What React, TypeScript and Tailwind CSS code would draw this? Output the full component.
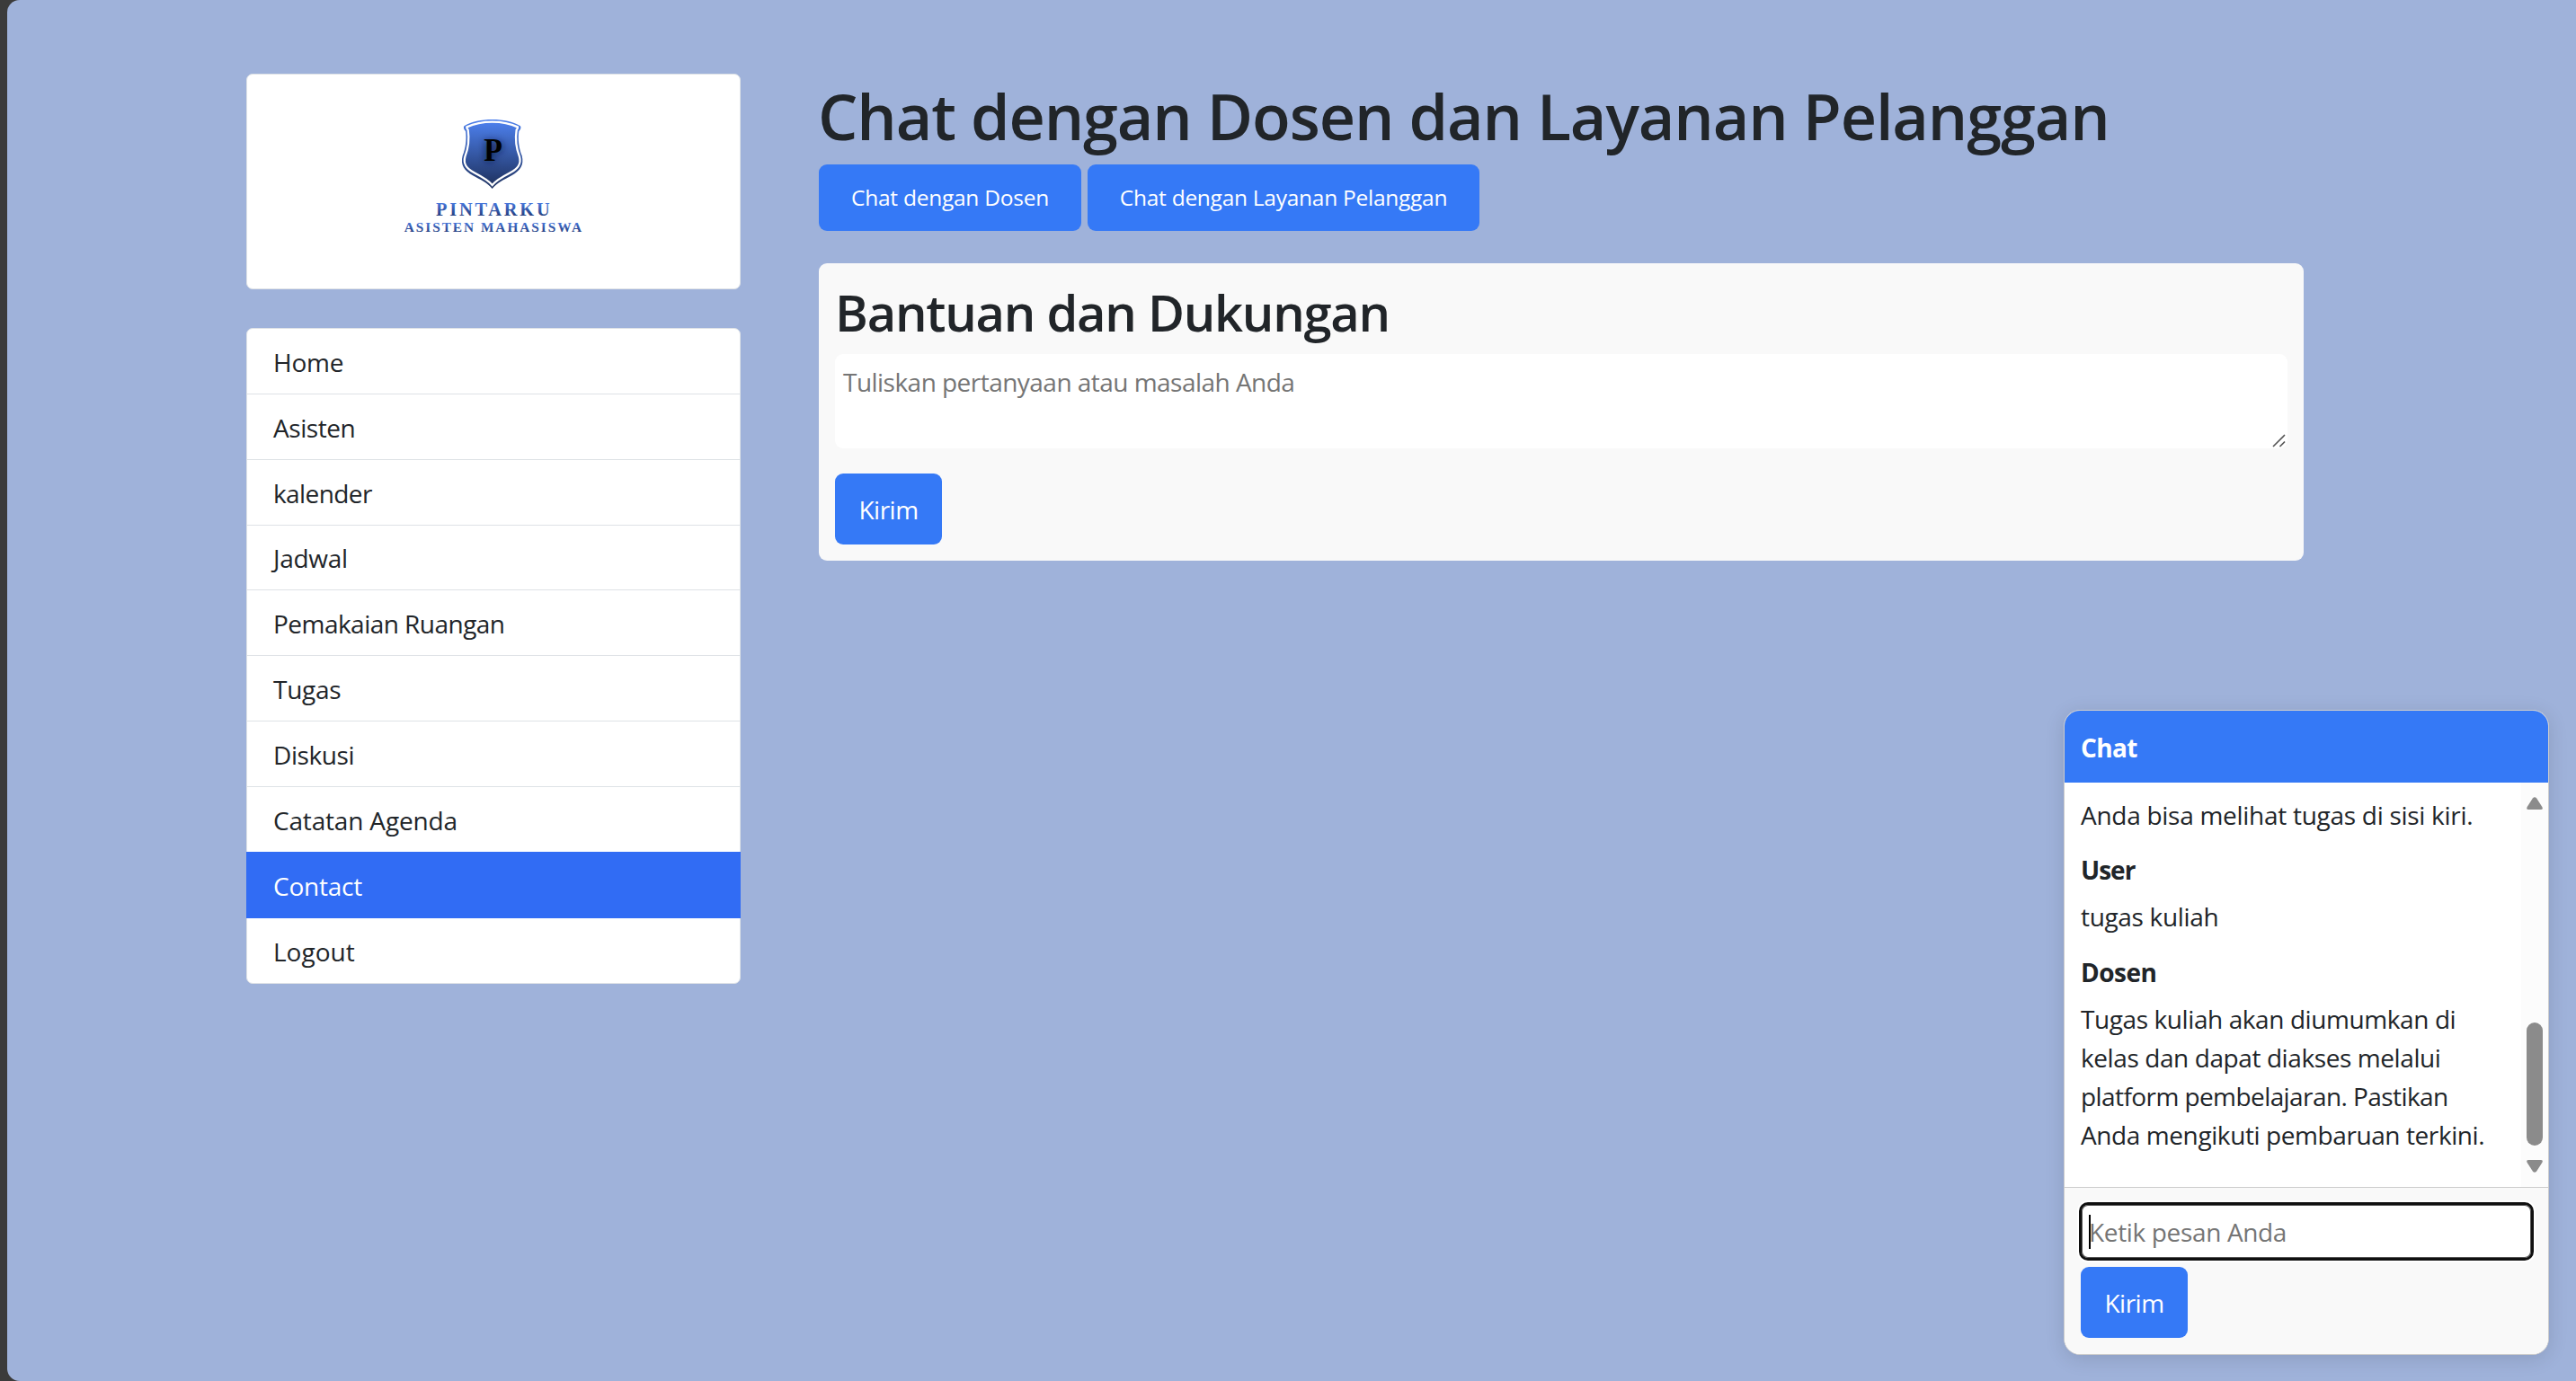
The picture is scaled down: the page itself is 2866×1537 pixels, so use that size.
const navItems = [
  { label: 'Home', style: 'h-[73px] border-b tracking-[-0.2px]' },
  { label: 'Asisten', style: 'h-[73px] border-b tracking-[-0.45px]' },
  { label: 'kalender', style: 'h-[73px] border-b tracking-[-0.6px]' },
  { label: 'Jadwal', style: 'h-[72px] border-b tracking-[-0.3px]' },
  { label: 'Pemakaian Ruangan', style: 'h-[73px] border-b tracking-[-0.53px]' },
  { label: 'Tugas', style: 'h-[73px] border-b tracking-[-0.25px]' },
  { label: 'Diskusi', style: 'h-[73px] border-b tracking-[-0.4px]' },
  { label: 'Catatan Agenda', style: 'h-[72px] tracking-[-0.17px]' },
  { label: 'Contact', style: '-mx-px h-[74px] bg-[#316cf4] pl-[30px] text-white tracking-[-0.22px]' },
  { label: 'Logout', style: 'h-[72px] tracking-[0px]' },
];

function Logo() {
  return (
    <svg viewBox="0 21 774 510" className="h-[170px] w-[258px]" role="img" aria-label="Pintarku">
      <defs>
        <linearGradient id="shield" x1="0" y1="0" x2="0" y2="1">
          <stop offset="0" stopColor="#4c7fec" />
          <stop offset="1" stopColor="#1f3260" />
        </linearGradient>
        <linearGradient id="title" gradientUnits="userSpaceOnUse" x1="0" y1="345" x2="0" y2="394">
          <stop offset="0" stopColor="#4a7be3" />
          <stop offset="1" stopColor="#223a78" />
        </linearGradient>
        <linearGradient id="subtitle" gradientUnits="userSpaceOnUse" x1="0" y1="410" x2="0" y2="448">
          <stop offset="0" stopColor="#4a7be3" />
          <stop offset="1" stopColor="#223a78" />
        </linearGradient>
        <filter id="glow" x="-50%" y="-50%" width="200%" height="200%">
          <feGaussianBlur stdDeviation="12" />
        </filter>
      </defs>
      <path
        d="M383 69C420 69 452 76 477 91C480 97 478 102 472 108C468 135 472 165 482 190C490 222 476 240 448 256C422 270 398 282 383 300C368 282 344 270 318 256C290 240 276 222 284 190C294 165 298 135 294 108C288 102 286 97 289 91C314 76 346 69 383 69Z"
        fill="url(#shield)"
      />
      <path
        d="M383 77C415 77 444 83 468 94C469 98 467 101 464 104C459 137 464 168 474 193C481 219 468 234 443 247C418 260 397 271 383 288C369 271 348 260 323 247C298 234 285 219 292 193C302 168 307 137 302 104C299 101 297 98 298 94C322 83 351 77 383 77Z"
        fill="url(#shield)"
        stroke="#fff"
        strokeWidth="7"
      />
      <text x="386" y="207" textAnchor="middle" fontFamily="Liberation Serif, serif" fontWeight="700" fontSize="104" fill="#101c40" filter="url(#glow)">
        P
      </text>
      <text x="355" y="207" textLength="62" lengthAdjust="spacingAndGlyphs" fontFamily="Liberation Serif, serif" fontWeight="700" fontSize="110" fill="#000">
        P
      </text>
      <text x="195" y="390" textLength="380" fontFamily="Liberation Serif, serif" fontWeight="700" fontSize="61" fill="url(#title)">
        PINTARKU
      </text>
      <text x="89" y="445" textLength="592" fontFamily="Liberation Serif, serif" fontWeight="700" fontSize="46" fill="url(#subtitle)">
        ASISTEN MAHASISWA
      </text>
    </svg>
  );
}

function Sidebar() {
  return (
    <aside className="flex w-[550px] flex-col gap-[43px]">
      <div className="flex h-[240px] items-center justify-center rounded-[7px] border border-[#dee2e6] bg-white">
        <Logo />
      </div>
      <nav className="flex flex-col rounded-[7px] border border-[#dee2e6] bg-white">
        {navItems.map((item) => (
          <a key={item.label} href="#" className={`flex items-center border-[#dee2e6] pt-px pl-[29px] ${item.style}`}>
            {item.label}
          </a>
        ))}
      </nav>
    </aside>
  );
}

function MainContent() {
  return (
    <main className="flex w-[1652px] flex-col">
      <h1 className="-ml-px h-[101px] text-[70px] leading-[94px] font-semibold tracking-[-1.08px] whitespace-nowrap">
        Chat dengan Dosen dan Layanan Pelanggan
      </h1>
      <div className="flex gap-[7px] text-[24.5px] text-white">
        <button className="h-[74px] w-[292px] rounded-[9px] bg-[#3579f6] pt-px tracking-[-0.25px]">Chat dengan Dosen</button>
        <button className="h-[74px] w-[436px] rounded-[9px] bg-[#3579f6] pt-px tracking-[-0.27px]">
          Chat dengan Layanan Pelanggan
        </button>
      </div>
      <section className="mt-9 flex h-[331px] flex-col items-start rounded-[9px] bg-[#f9f9f9] p-[18px]">
        <h2 className="h-[83px] text-[56px] leading-[73px] font-semibold tracking-[-1.24px]">Bantuan dan Dukungan</h2>
        <div className="relative h-[105px] w-full">
          <textarea
            placeholder="Tuliskan pertanyaan atau masalah Anda"
            className="block h-full w-full resize-none rounded-[9px] bg-white px-[9px] py-[10px] leading-[43px] tracking-[-0.53px] outline-none placeholder:text-[#757575]"
          />
          <svg viewBox="0 0 16 16" className="absolute right-[1px] bottom-[1px] h-4 w-4" fill="none" stroke="#555" strokeWidth="1.6">
            <path d="M1 15 14 2M8.500 15 14 9.500" />
          </svg>
        </div>
        <button className="mt-7 h-[79px] w-[119px] rounded-[9px] bg-[#3579f6] tracking-[-0.5px] text-white">Kirim</button>
      </section>
    </main>
  );
}

function ScrollArrow({ className }: { className: string }) {
  return (
    <svg viewBox="0 0 18 14" className={`h-[14px] w-[18px] ${className}`} fill="#8b8b8b">
      <path d="M6.800 1.600Q9-1 11.200 1.600L17.300 11Q18.800 14 15.800 14H2.200Q-.8 14 .7 11Z" />
    </svg>
  );
}

function ChatScrollbar() {
  return (
    <div className="flex w-[30px] flex-col items-center bg-[#fcfcfc] pt-4 pb-4">
      <ScrollArrow className="rotate-0" />
      <div className="mt-[237px] h-[137px] w-[18px] rounded-full bg-[#8b8b8b]" />
      <ScrollArrow className="mt-4 rotate-180" />
    </div>
  );
}

function ChatWidget() {
  return (
    <section className="absolute top-[790px] left-[2296px] flex h-[718px] w-[540px] flex-col overflow-hidden rounded-[18px] border border-[#ccc] bg-white shadow-[0_4px_22px_rgba(0,0,0,0.12)]">
      <header className="flex h-[80px] shrink-0 items-center bg-[#3579f6] pt-px pl-[18px] font-bold tracking-[-0.6px] text-white">
        Chat
      </header>
      <div className="flex h-[450px] shrink-0">
        <div className="flex-1 pt-[15px] pl-[18px] leading-[43.2px] whitespace-nowrap">
          <p className="tracking-[-0.28px]">Anda bisa melihat tugas di sisi kiri.</p>
          <p className="mt-[18px] font-bold tracking-[-1px]">User</p>
          <p className="mt-[9px] tracking-[-0.33px]">tugas kuliah</p>
          <p className="mt-[18px] font-bold tracking-[-0.5px]">Dosen</p>
          <p className="mt-[9px] tracking-[-0.41px]">
            Tugas kuliah akan diumumkan di
            <br />
            kelas dan dapat diakses melalui
            <br />
            <span className="tracking-[-0.58px]">platform pembelajaran. Pastikan</span>
            <br />
            Anda mengikuti pembaruan terkini.
          </p>
        </div>
        <ChatScrollbar />
      </div>
      <footer className="flex flex-1 flex-col items-start border-t border-[#ccc] bg-[#f9f9f9] px-4 pt-4">
        <div className="flex h-[65px] w-full items-center rounded-[10px] border-[3px] border-[#101010] bg-white pl-2 shadow-[0_0_0_2px_#fff,inset_0_0_0_1px_#555]">
          <span className="h-[38px] w-[2px] bg-black" />
          <input
            placeholder="Ketik pesan Anda"
            className="-ml-[2px] w-[480px] tracking-[-0.35px] outline-none placeholder:text-[#757575]"
          />
        </div>
        <button className="mt-[7px] ml-[2px] h-[79px] w-[119px] rounded-[9px] bg-[#3579f6] tracking-[-0.5px] text-white">Kirim</button>
      </footer>
    </section>
  );
}

export default function App() {
  return (
    <div className="relative h-[1537px] w-[2866px] overflow-hidden bg-[#3b3b3b] pl-2 font-['Open_Sans',sans-serif] text-[28px] text-[#212529]">
      <div className="flex h-full items-start gap-[87px] rounded-l-[14px] bg-[#9fb2da] pt-[82px] pl-[266px]">
        <Sidebar />
        <MainContent />
      </div>
      <ChatWidget />
    </div>
  );
}
